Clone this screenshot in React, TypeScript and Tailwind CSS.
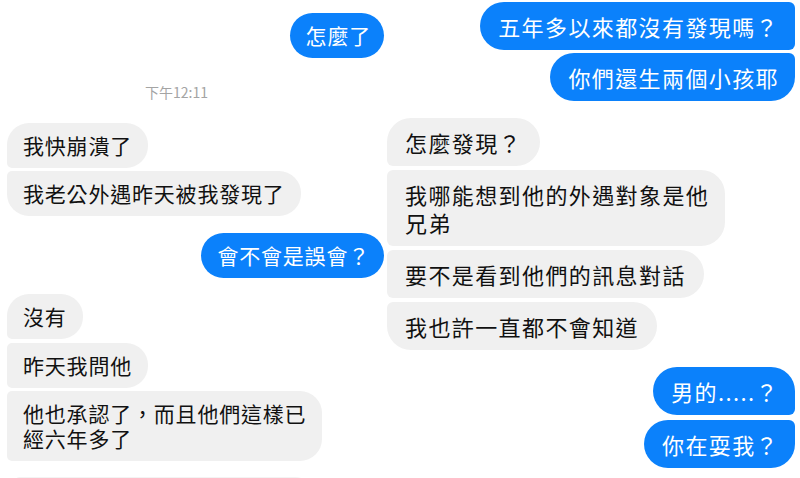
import React from "react";

const font = { fontFamily: '"Noto Sans CJK TC", "Noto Sans", sans-serif' };

export default function App() {
  return (
    <div
      className="w-[800px] h-[478px] overflow-hidden bg-white flex items-start"
      style={font}
    >
      {/* Left screenshot */}
      <div className="w-[386px] shrink-0 flex flex-col pt-[13px] pl-[7px] pr-[2px] text-[21px] leading-[25px] tracking-[0.8px] [&>*]:shrink-0">
        <div className="self-end h-[45px] flex items-center bg-[#0b81fb] text-white rounded-[23px] pl-[16px] pr-[13px]">
          怎麼了
        </div>
        <div className="mt-[24px] h-[20px] leading-[20px] text-[14px] tracking-normal text-[#a4a4a4] self-start ml-[138px]">
          下午12:11
        </div>
        <div className="mt-[21px] self-start bg-[#f0f0f0] text-[#111] rounded-[22px] rounded-bl-[5px] px-[16px] py-[10px]">
          我快崩潰了
        </div>
        <div className="mt-[3px] self-start bg-[#f0f0f0] text-[#111] rounded-[22px] rounded-tl-[5px] px-[16px] py-[10px]">
          我老公外遇昨天被我發現了
        </div>
        <div className="mt-[17px] self-end bg-[#0b81fb] text-white rounded-[23px] pl-[16px] pr-[14px] py-[10px]">
          會不會是誤會？
        </div>
        <div className="mt-[16px] self-start bg-[#f0f0f0] text-[#111] rounded-[22px] rounded-bl-[5px] px-[16px] py-[10px]">
          沒有
        </div>
        <div className="mt-[4px] self-start bg-[#f0f0f0] text-[#111] rounded-[22px] rounded-tl-[5px] rounded-bl-[5px] px-[16px] py-[10px]">
          昨天我問他
        </div>
        <div className="mt-[3px] self-start bg-[#f0f0f0] text-[#111] rounded-[22px] rounded-tl-[5px] rounded-bl-[5px] px-[16px] py-[10px]">
          他也承認了，而且他們這樣已
          <br />
          經六年多了
        </div>
        <div className="mt-[16px] self-start w-[300px] ml-[8px] h-[40px] bg-[#f3f3f3] rounded-[22px] rounded-tl-[5px]" />
      </div>

      {/* Right screenshot */}
      <div className="flex-1 flex flex-col pt-[2px] pl-[1px] pr-[5px] text-[22px] leading-[28px] tracking-[1.4px] [&>*]:shrink-0">
        <div className="self-end bg-[#0b81fb] text-white rounded-[24px] rounded-tr-[6px] rounded-br-[6px] pl-[18px] pr-[16px] py-[10px]">
          五年多以來都沒有發現嗎？
        </div>
        <div className="mt-[3px] self-end bg-[#0b81fb] text-white rounded-[24px] rounded-tr-[6px] pl-[18px] pr-[16px] py-[10px]">
          你們還生兩個小孩耶
        </div>
        <div className="mt-[17px] self-start bg-[#f0f0f0] text-[#111] rounded-[24px] rounded-bl-[6px] px-[18px] py-[10px]">
          怎麼發現？
        </div>
        <div className="mt-[4px] self-start bg-[#f0f0f0] text-[#111] rounded-[24px] rounded-tl-[6px] rounded-bl-[6px] pl-[18px] pr-[16px] py-[10px]">
          我哪能想到他的外遇對象是他
          <br />
          兄弟
        </div>
        <div className="mt-[4px] self-start bg-[#f0f0f0] text-[#111] rounded-[24px] rounded-tl-[6px] rounded-bl-[6px] px-[18px] py-[10px]">
          要不是看到他們的訊息對話
        </div>
        <div className="mt-[4px] self-start bg-[#f0f0f0] text-[#111] rounded-[24px] rounded-tl-[6px] px-[18px] py-[10px]">
          我也許一直都不會知道
        </div>
        <div className="mt-[17px] self-end bg-[#0b81fb] text-white rounded-[24px] rounded-br-[6px] pl-[18px] pr-[16px] py-[10px]">
          男的.....？
        </div>
        <div className="mt-[5px] self-end bg-[#0b81fb] text-white rounded-[24px] rounded-tr-[6px] pl-[18px] pr-[16px] py-[10px]">
          你在耍我？
        </div>
      </div>
    </div>
  );
}
